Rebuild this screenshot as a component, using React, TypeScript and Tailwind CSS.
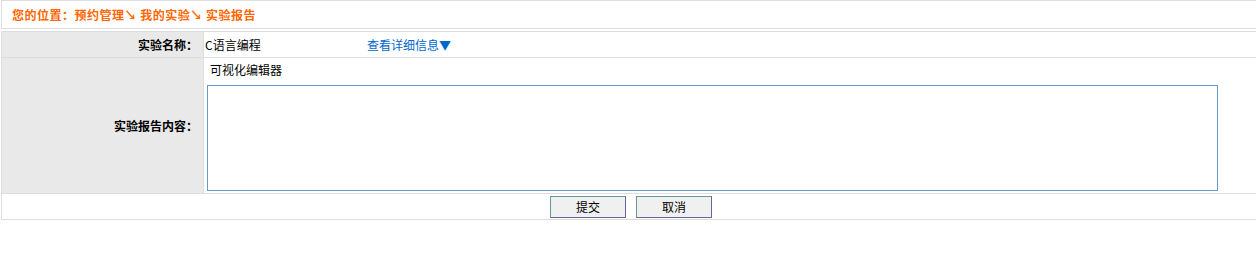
import React from 'react';

const font = { fontFamily: '"Noto Sans CJK SC", "Liberation Sans", sans-serif' };

const btn =
  'w-[76px] h-[22px] bg-[#f0f0f0] border border-t-[#669999] border-l-[#669999] border-b-[#666699] border-r-[#666699]';

export default function App() {
  return (
    <div className="w-full h-[257px] overflow-hidden bg-white text-[12px] text-black" style={font}>
      {/* breadcrumb */}
      <div className="ml-px w-[calc(100%+4px)] h-[29px] border border-[#dddddd] flex items-center pl-[10px]">
        <span className="font-bold text-[#ff6600] tracking-[0.5px]">
          您的位置：预约管理↘ 我的实验↘ 实验报告
        </span>
      </div>

      <table className="mt-[2px] ml-px w-[calc(100%+4px)] border-collapse">
        <tbody>
          <tr className="h-[26px]">
            <td className="w-[202px] bg-[#e9e9e9] border border-[#dddddd] text-right pr-[5px] font-bold">
              实验名称：
            </td>
            <td className="border border-[#dddddd] pl-px">
              <span className="inline-block w-[162px]">C语言编程</span>
              <a className="text-[#0066cc] cursor-pointer">查看详细信息▼</a>
            </td>
          </tr>
          <tr className="h-[136px]">
            <td className="bg-[#e9e9e9] border border-[#dddddd] text-right pr-[5px] font-bold">
              实验报告内容：
            </td>
            <td className="border border-[#dddddd] align-top pl-[3px]">
              <div className="pt-[2px] pl-[3px] h-[27px] leading-[20px]">可视化编辑器</div>
              <div className="w-[1011px] h-[106px] border border-[#6699cc] bg-white" />
            </td>
          </tr>
          <tr className="h-[26px]">
            <td colSpan={2} className="border border-[#dddddd]">
              <div className="w-[1258px] flex justify-center gap-[10px]">
                <button className={btn}>提交</button>
                <button className={btn}>取消</button>
              </div>
            </td>
          </tr>
        </tbody>
      </table>
    </div>
  );
}
